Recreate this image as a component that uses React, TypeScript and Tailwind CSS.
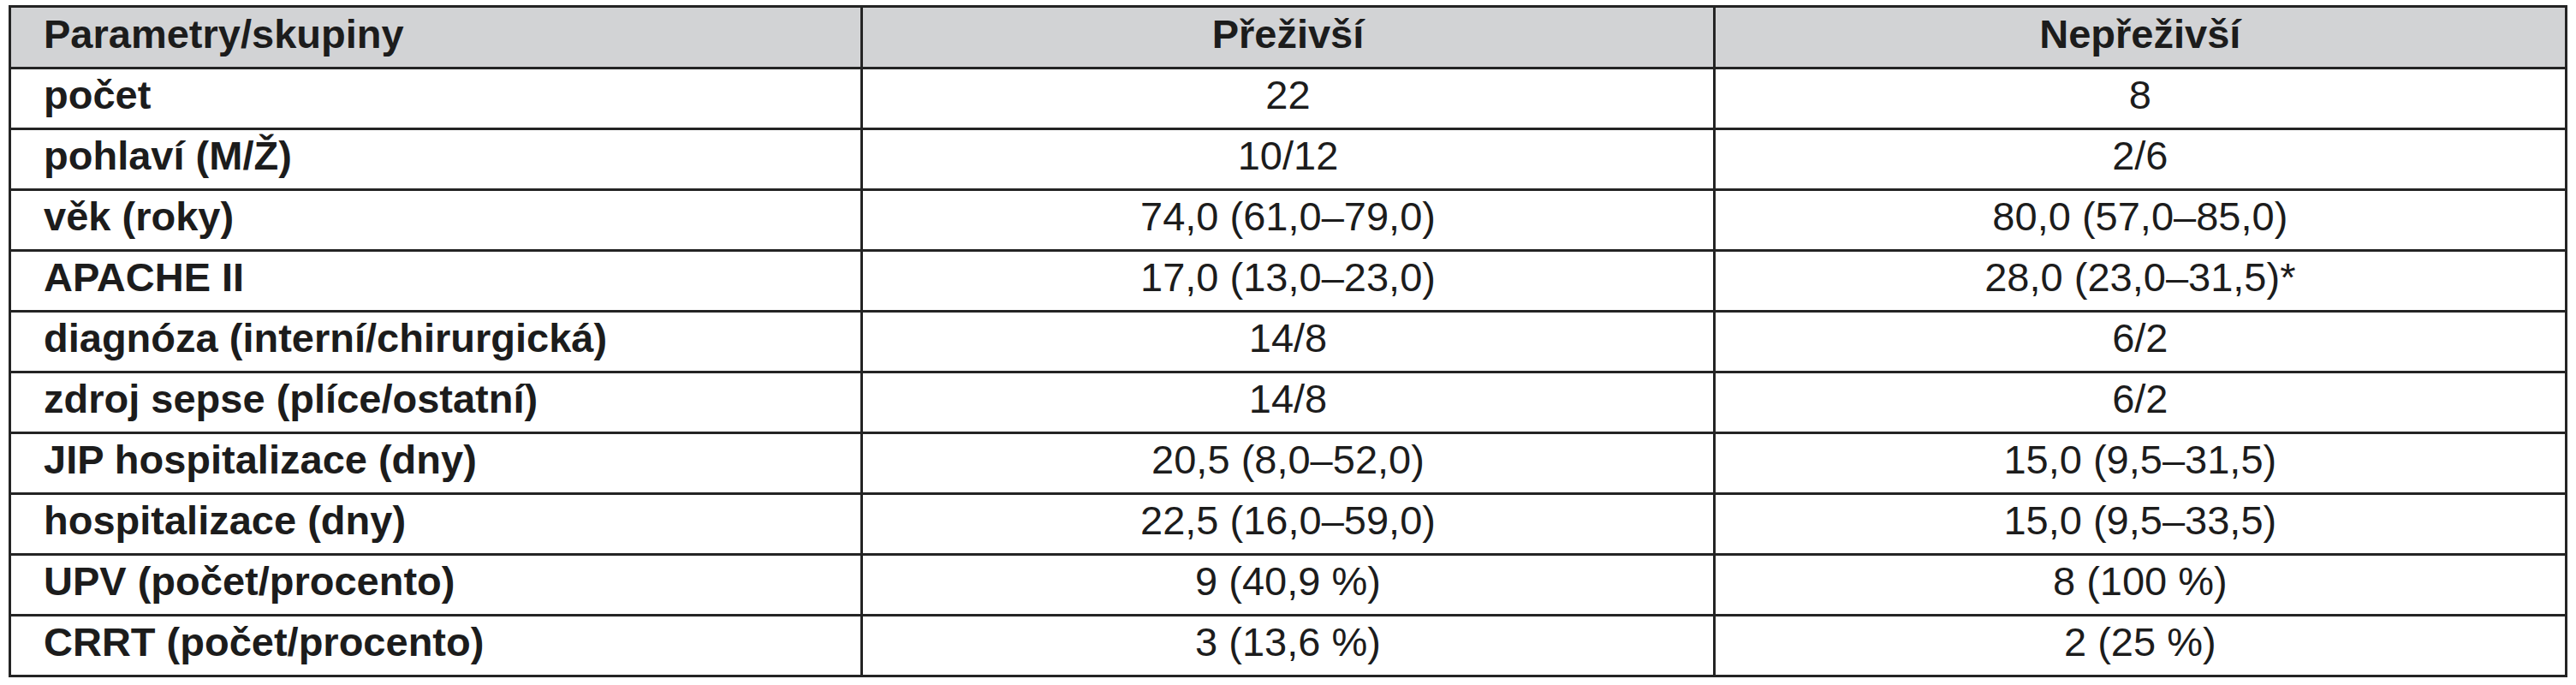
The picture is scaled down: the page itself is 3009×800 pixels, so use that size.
const rows: [string, string, string][] = [
  ["počet", "22", "8"],
  ["pohlaví (M/Ž)", "10/12", "2/6"],
  ["věk (roky)", "74,0 (61,0–79,0)", "80,0 (57,0–85,0)"],
  ["APACHE II", "17,0 (13,0–23,0)", "28,0 (23,0–31,5)*"],
  ["diagnóza (interní/chirurgická)", "14/8", "6/2"],
  ["zdroj sepse (plíce/ostatní)", "14/8", "6/2"],
  ["JIP hospitalizace (dny)", "20,5 (8,0–52,0)", "15,0 (9,5–31,5)"],
  ["hospitalizace (dny)", "22,5 (16,0–59,0)", "15,0 (9,5–33,5)"],
  ["UPV (počet/procento)", "9 (40,9 %)", "8 (100 %)"],
  ["CRRT (počet/procento)", "3 (13,6 %)", "2 (25 %)"],
];

const cell = "border-[3px] border-[#242424] p-0 pb-[8px] align-middle";

export default function App() {
  return (
    <div className="min-h-[800px] w-[3009px] bg-white pl-[10px] pt-[6px] font-['Liberation_Sans',Arial,sans-serif] text-[47px] leading-[52px] text-[#1c1c1c]">
      <table className="w-[2989px] table-fixed border-collapse border-[3px] border-[#242424]">
        <thead>
          <tr className="h-[72px] bg-[#d2d3d5]">
            <th className={`${cell} pl-[38px] text-left font-bold`}>Parametry/skupiny</th>
            <th className={`${cell} text-center font-bold`}>Přeživší</th>
            <th className={`${cell} text-center font-bold`}>Nepřeživší</th>
          </tr>
        </thead>
        <tbody>
          {rows.map(([label, alive, dead]) => (
            <tr key={label} className="h-[71px]">
              <td className={`${cell} pl-[38px] font-bold`}>{label}</td>
              <td className={`${cell} text-center`}>{alive}</td>
              <td className={`${cell} text-center`}>{dead}</td>
            </tr>
          ))}
        </tbody>
      </table>
    </div>
  );
}
